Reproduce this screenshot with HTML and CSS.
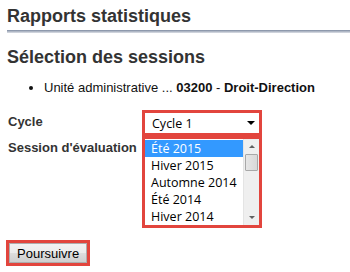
FILE: index.html
```html
<!DOCTYPE html>
<html lang="fr">
<head>
    <meta charset="UTF-8">
    <title>Rapports statistiques</title>
    <link rel="stylesheet" href="styles.css">
</head>
<body>
    <div class="page">
        <h1>Rapports statistiques</h1>
        <div class="rule"></div>
        <h2>Sélection des sessions</h2>
        <ul class="info">
            <li>Unité administrative ... <b>03200</b> - <b>Droit-Direction</b></li>
        </ul>
        <div class="form">
            <label class="lbl">Cycle</label>
            <div class="hl">
                <div class="dropdown">
                    <span>Cycle 1</span>
                    <span class="arrow"></span>
                </div>
            </div>
            <label class="lbl">Session d'évaluation</label>
            <div class="hl">
                <div class="listbox">
                    <ul class="options">
                        <li class="sel">Été 2015</li>
                        <li>Hiver 2015</li>
                        <li>Automne 2014</li>
                        <li>Été 2014</li>
                        <li>Hiver 2014</li>
                    </ul>
                    <div class="scroll">
                        <span class="up"></span>
                        <span class="thumb"></span>
                        <span class="down"></span>
                    </div>
                </div>
            </div>
        </div>
        <div class="hl btn-wrap">
            <button type="button">Poursuivre</button>
        </div>
    </div>
</body>
</html>
```
FILE: styles.css
```css
body {
    margin: 0;
    font-family: "Liberation Sans", Arial, sans-serif;
    color: #222;
    background: #fff;
}
.page {
    padding: 5px 0 0 7px;
}
h1 {
    margin: 0;
    font-size: 18px;
    line-height: 22px;
    color: #333;
}
.rule {
    height: 3px;
    margin-top: 3px;
    background: linear-gradient(#7d8aa0, #b9c0cc 60%, #dde0e6);
}
h2 {
    margin: 13px 0 0;
    font-size: 18px;
    line-height: 22px;
    color: #333;
}
.info {
    margin: 12px 0 0;
    padding-left: 37px;
    font-size: 13px;
    line-height: 16px;
    color: #111;
}
.form {
    display: grid;
    grid-template-columns: 135px auto;
    margin-top: 14px;
    justify-content: start;
}
.lbl {
    font-family: "Liberation Sans", Tahoma, sans-serif;
    font-weight: bold;
    font-size: 13px;
    line-height: 15px;
    white-space: nowrap;
    color: #333;
    padding: 4px 0 0 1px;
}
.hl {
    border: 3px solid #e2453d;
    width: 114px;
}
.dropdown {
    display: flex;
    justify-content: space-between;
    align-items: center;
    height: 20px;
    padding: 0 4px 0 7px;
    font-family: "Open Sans", "Segoe UI", sans-serif;
    font-size: 12.5px;
    color: #000;
    background: #fff;
}
.arrow {
    width: 0;
    height: 0;
    border-left: 4px solid transparent;
    border-right: 4px solid transparent;
    border-top: 4px solid #000;
}
.listbox {
    display: flex;
    height: 86px;
    background: #fff;
}
.options {
    flex: 1;
    margin: 0;
    padding: 1px 0 0;
    list-style: none;
    font-family: "Open Sans", "Segoe UI", sans-serif;
    font-size: 12.5px;
    color: #000;
}
.options li {
    height: 17px;
    line-height: 17px;
    padding-left: 6px;
}
.options li.sel {
    background: #3399ff;
    color: #fff;
}
.scroll {
    width: 15px;
    display: flex;
    flex-direction: column;
    align-items: center;
    background: #efefef;
    border-left: 1px solid #e4e4e4;
}
.up, .down {
    width: 0;
    height: 0;
    border-left: 3px solid transparent;
    border-right: 3px solid transparent;
    margin: 6px 0;
}
.up {
    border-bottom: 3px solid #606060;
}
.down {
    border-top: 3px solid #606060;
    margin-top: auto;
}
.thumb {
    width: 13px;
    height: 17px;
    background: linear-gradient(90deg, #e6e6e6, #d8d8d8);
    border: 1px solid #a8a8a8;
    box-sizing: border-box;
    border-radius: 1px;
}
.btn-wrap {
    display: inline-block;
    width: auto;
    margin: 12px 0 0 -1px;
}
button {
    display: block;
    margin: 0;
    padding: 0 7px;
    height: 20px;
    font-family: "Liberation Sans", Arial, sans-serif;
    font-size: 13px;
    color: #000;
    border: 1px solid #adadad;
    background: linear-gradient(#f2f2f2, #ebebeb 50%, #dddddd 51%, #cfcfcf);
}
```
